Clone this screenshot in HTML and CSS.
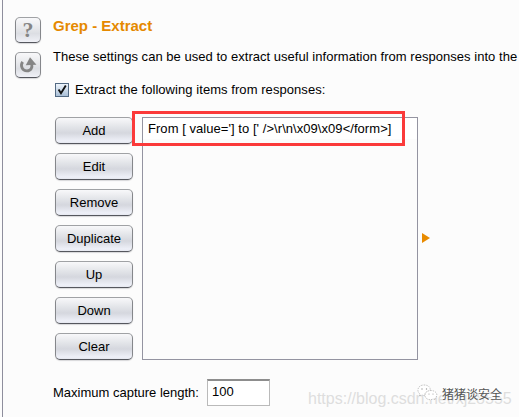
FILE: index.html
```html
<!DOCTYPE html>
<html lang="en">
<head>
<meta charset="utf-8">
<title>Grep - Extract</title>
<link rel="stylesheet" href="styles.css">
</head>
<body>
<main class="panel">
  <aside class="tools">
    <button class="tool" aria-label="Help"><span class="help">?</span></button>
    <button class="tool" aria-label="Restore defaults"><svg width="20" height="20" viewBox="0 0 18 18"><path d="M4.2 6.2C1.6 9.8 4.1 14.3 8 14.3C11.6 14.3 13.3 11.4 12.2 7.5" fill="none" stroke="#858585" stroke-width="2.5"/><path d="M10.8 2L16.6 8.7L7 9.3Z" fill="#858585"/></svg></button>
  </aside>
  <section class="content">
    <h1>Grep - Extract</h1>
    <p class="description">These settings can be used to extract useful information from responses into the</p>
    <div class="check-row">
      <span class="checkbox"><svg width="12" height="12" viewBox="0 0 12 12"><path d="M2.6 5.4L5 9.2L9.8 1.6" fill="none" stroke="#111" stroke-width="1.9"/></svg></span>
      <span class="check-text">Extract the following items from responses:</span>
    </div>
    <div class="editor">
      <div class="buttons">
        <button>Add</button><button>Edit</button><button>Remove</button><button>Duplicate</button><button>Up</button><button>Down</button><button>Clear</button>
      </div>
      <div class="list"><div class="item">From [ value='] to [' /&gt;\r\n\x09\x09&lt;/form&gt;]</div><div class="highlight"></div></div>
      <svg class="arrow" width="8" height="10" viewBox="0 0 8 10"><path d="M0 0L8 5L0 10Z" fill="#e88b00"/></svg>
    </div>
    <div class="length-row"><span class="length-text">Maximum capture length:</span><div class="field">100</div></div>
  </section>
  <div class="url">https://blog.csdn.net/xj28555</div>
  <div class="brand">
    <svg width="21" height="18" viewBox="0 0 21 18"><g fill="#fff" stroke="#aaa" stroke-width=".7" stroke-dasharray="1.5 1"><path d="M2.5 12L3 10C-1 7 1 1 7 1C12 1 14 4 13 7C9 7 7 10 8 12L5 11Z"/><path d="M18 15.5L18.2 14C22 11 19 6.5 14 6.5C8 6.5 6 12 10 14.8C12 16 14 16 16 15Z"/></g><g fill="#999"><circle cx="5" cy="5" r=".7"/><circle cx="9.5" cy="5" r=".7"/><circle cx="12" cy="10" r=".6"/><circle cx="16" cy="10" r=".6"/></g></svg>
    <span>猪猪谈安全</span>
  </div>
</main>
</body>
</html>
```
FILE: styles.css
```css
* { box-sizing: border-box; }
body { margin: 0; width: 519px; height: 417px; overflow: hidden; background: #fcfcfc; font: 13px/16px "Liberation Sans", Arial, sans-serif; color: #000; }
.panel { position: relative; display: flex; height: 417px; margin-left: 2px; border-left: 1px solid #8e8e9d; }
button { border: 1px solid #85878b; border-top-color: #a0a2a5; border-bottom-color: #55575e; border-radius: 5px; background: linear-gradient(#f8f8fa, #e3e5e9 35%, #d5d7de 60%, #eef0f8 92%, #e5e7ef); padding: 0; color: #000; box-shadow: 0 1px 1px #d8d8da; }
.tools { width: 50px; padding: 17px 0 0 12px; display: flex; flex-direction: column; gap: 9px; flex: none; }
.tool { width: 26px; height: 26px; display: flex; align-items: center; justify-content: center; background: linear-gradient(#f8f8fa, #e8e9ec 40%, #dcdee3 65%, #f0f1f7); }
.help { color: #858585; font: bold 22px/24px "Liberation Serif", serif; }
.content { width: 466px; flex: none; }
h1 { margin: 17px 0 0; font-size: 15px; line-height: 18px; color: #e58900; white-space: nowrap; }
.description { margin: 14px 0 0; white-space: nowrap; letter-spacing: .03px; }
.check-row { display: flex; align-items: center; margin-top: 17px; padding-left: 2px; gap: 6px; height: 16px; }
.checkbox { width: 14px; height: 14px; border: 1px solid #536a83; background: linear-gradient(#eef5fc, #a9bfd6); display: flex; }
.check-text { letter-spacing: .06px; }
.editor { display: flex; margin-top: 19px; padding-left: 2px; height: 244px; }
.buttons { display: flex; flex-direction: column; gap: 9px; width: 78px; }
.buttons button { height: 27px; flex: none; font: 13px/24px "Liberation Sans", Arial, sans-serif; }
.list { position: relative; width: 276px; height: 243px; margin-left: 9px; border: 1px solid #9494a1; }
.item { height: 21px; padding: 3px 0 0 5px; background: #fff; white-space: nowrap; letter-spacing: .05px; }
.highlight { position: absolute; left: -11px; top: -7px; width: 273px; height: 35px; border: 3px solid #fb3a3a; }
.arrow { margin: 116px 0 0 4px; }
.length-row { display: flex; align-items: center; margin-top: 18px; height: 27px; }
.length-text { width: 154px; white-space: nowrap; }
.field { width: 63px; height: 27px; border: 1px solid #bababa; border-top: 2px solid #8d8d8d; background: #fff; padding: 3px 4px; }
.url { position: absolute; left: 305px; top: 389px; font-size: 16px; line-height: 20px; color: #dedede; white-space: nowrap; }
.brand { position: absolute; left: 414px; top: 384px; display: flex; gap: 4px; font: 12px/20px "Noto Sans CJK SC", sans-serif; color: #555; white-space: nowrap; }
.brand span { text-shadow: -1px -1px 0 #fff; }
```
